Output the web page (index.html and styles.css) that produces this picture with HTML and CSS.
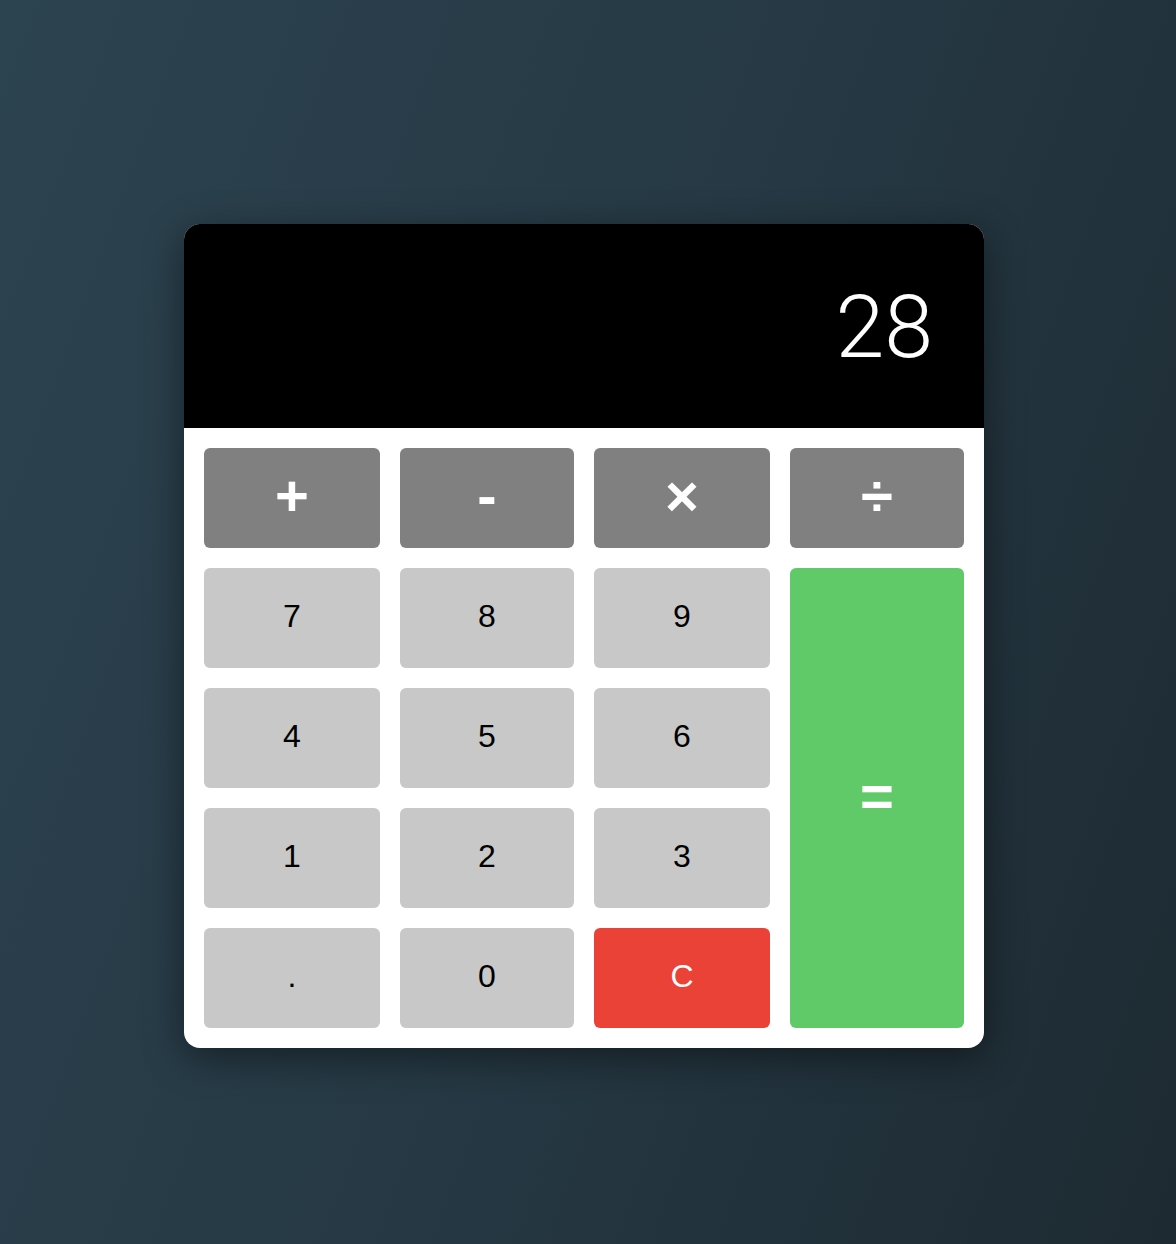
FILE: index.html
```html
<!DOCTYPE html>
<html lang="en">
<head>
<meta charset="utf-8">
<title>Calculator</title>
<link rel="stylesheet" href="styles.css">
</head>
<body>
<div class="calculator">
  <div class="display">28</div>
  <div class="keys">
    <button class="key op">+</button>
    <button class="key op">-</button>
    <button class="key op">×</button>
    <button class="key op">÷</button>
    <button class="key">7</button>
    <button class="key">8</button>
    <button class="key">9</button>
    <button class="key equals">=</button>
    <button class="key">4</button>
    <button class="key">5</button>
    <button class="key">6</button>
    <button class="key">1</button>
    <button class="key">2</button>
    <button class="key">3</button>
    <button class="key">.</button>
    <button class="key">0</button>
    <button class="key clear">C</button>
  </div>
</div>
</body>
</html>
```
FILE: styles.css
```css
html, body {
  margin: 0;
  height: 100%;
}
body {
  box-sizing: border-box;
  padding: 224px 0 0 184px;
  background: linear-gradient(110deg, #2c4350 0%, #263944 50%, #1d2a32 100%);
  font-family: "Liberation Sans", Arial, sans-serif;
}
.calculator {
  width: 800px;
  background: #fff;
  border-radius: 16px;
  overflow: hidden;
  box-shadow: 0 10px 40px rgba(0, 0, 0, 0.45);
}
.display {
  height: 204px;
  box-sizing: border-box;
  background: #000;
  color: #fff;
  font-family: Roboto, "Liberation Sans", sans-serif;
  font-weight: 300;
  font-size: 88px;
  line-height: 101px;
  text-align: right;
  padding: 52px 51px 51px;
}
.keys {
  display: grid;
  grid-template-columns: 176px 174px 176px 174px;
  grid-template-rows: repeat(5, 100px);
  gap: 20px;
  padding: 20px;
}
.key {
  border: none;
  border-radius: 6px;
  background: #c8c8c8;
  color: #000;
  font-family: "Liberation Sans", Arial, sans-serif;
  font-size: 32px;
  line-height: 1;
  padding: 0 0 4px;
}
.op {
  background: #808080;
  color: #fff;
  font-weight: bold;
  font-size: 58px;
}
.equals {
  grid-column: 4;
  grid-row: 2 / span 4;
  background: #60ca69;
  color: #fff;
  font-weight: bold;
  font-size: 58px;
}
.clear {
  background: #ea4236;
  color: #fff;
}
```
